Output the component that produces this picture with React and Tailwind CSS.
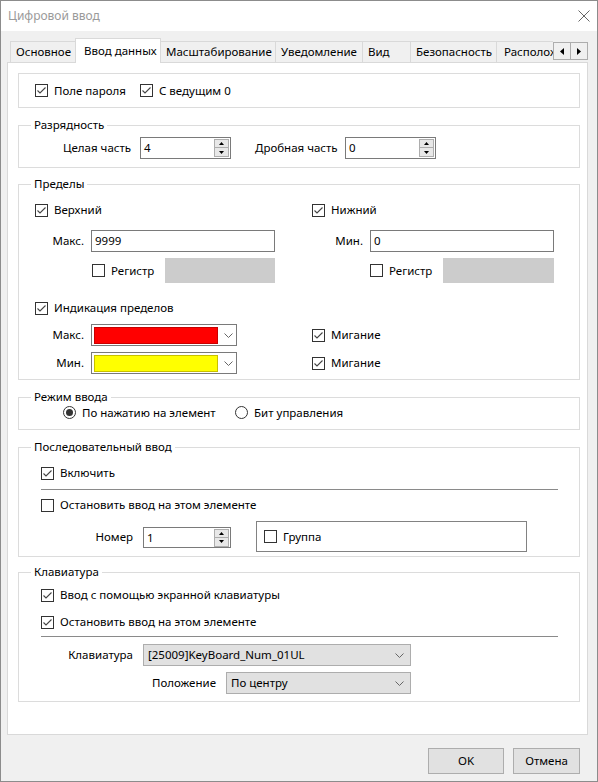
import React from 'react';

// Чекбокс в стиле Windows 10
const Check = ({ checked }) => (
  <svg width="13" height="13" viewBox="0 0 13 13" className="shrink-0">
    <rect x="0.5" y="0.5" width="12" height="12" fill="#fff" stroke="#333" />
    {checked && (
      <polyline points="2.5,6.5 5,9 10.5,3.5" fill="none" stroke="#444" strokeWidth="1.1" />
    )}
  </svg>
);

const CheckBox = ({ checked, label, className = '' }) => (
  <div className={`flex items-center gap-[6px] ${className}`}>
    <Check checked={checked} />
    <span className="whitespace-nowrap">{label}</span>
  </div>
);

const Radio = ({ checked, label, className = '' }) => (
  <div className={`flex items-center gap-[6px] ${className}`}>
    <svg width="13" height="13" viewBox="0 0 13 13" className="shrink-0">
      <circle cx="6.5" cy="6.5" r="6" fill="#fff" stroke="#333" />
      {checked && <circle cx="6.5" cy="6.5" r="3.5" fill="#333" />}
    </svg>
    <span className="whitespace-nowrap">{label}</span>
  </div>
);

const Chevron = () => (
  <svg width="9" height="5" viewBox="0 0 9 5" className="shrink-0">
    <polyline points="0.5,0.5 4.5,4.5 8.5,0.5" fill="none" stroke="#666" />
  </svg>
);

const SpinBox = ({ value, className = '' }) => (
  <div className={`flex items-center border border-[#7a7a7a] bg-white ${className}`}>
    <span className="flex-1 pl-[3px]">{value}</span>
    <div className="flex flex-col mr-[1px] border border-[#adadad] bg-[#e8e8e8]">
      <div className="w-[13px] h-[8px] flex items-center justify-center border-b border-[#adadad]">
        <svg width="5" height="3" viewBox="0 0 5 3">
          <polygon points="0,3 2.5,0 5,3" fill="#000" />
        </svg>
      </div>
      <div className="w-[13px] h-[8px] flex items-center justify-center">
        <svg width="5" height="3" viewBox="0 0 5 3">
          <polygon points="0,0 2.5,3 5,0" fill="#000" />
        </svg>
      </div>
    </div>
  </div>
);

const TextBox = ({ value, className = '' }) => (
  <div className={`flex items-center border border-[#7a7a7a] bg-white pl-[3px] ${className}`}>
    {value}
  </div>
);

const ColorCombo = ({ swatch }) => (
  <div className="flex items-center w-[146px] h-[22px] border border-[#7a7a7a] bg-white pl-[2px]">
    <div className={`w-[124px] h-[17px] border ${swatch}`} />
    <div className="flex-1 flex justify-center pl-[2px]">
      <Chevron />
    </div>
  </div>
);

const GrayCombo = ({ value, className = '' }) => (
  <div
    className={`flex items-center justify-between h-[22px] border border-[#adadad] bg-[#e1e1e1] pl-[4px] pr-[6px] ${className}`}
  >
    <span className="whitespace-nowrap">{value}</span>
    <Chevron />
  </div>
);

const Group = ({ title, className = '', children }) => (
  <fieldset className={`border border-[#dcdcdc] ${className}`}>
    <legend className="ml-[12px] px-[3px] leading-[16px]">{title}</legend>
    {children}
  </fieldset>
);

const Separator = () => <div className="w-[517px] h-px bg-[#8a8a8a]" />;

const tabs = [
  { name: 'Основное', w: 'w-[66px] border-l' },
  { name: 'Ввод данных', active: true },
  { name: 'Масштабирование', w: 'w-[115px]' },
  { name: 'Уведомление', w: 'w-[87px]' },
  { name: 'Вид', w: 'w-[48px]' },
  { name: 'Безопасность', w: 'w-[86px]' },
];

export default function App() {
  return (
    <div className="w-[598px] h-[782px] flex flex-col border border-[#8c8c8c] bg-[#f0f0f0] text-[11.5px] leading-[16px] text-black font-['Segoe_UI','Noto_Sans',sans-serif]">
      {/* заголовок окна */}
      <div className="h-[30px] bg-white flex items-center justify-between pl-[7px] pr-[7px]">
        <span className="text-[12px] text-[#9a9a9a]">Цифровой ввод</span>
        <svg width="12" height="12" viewBox="0 0 12 12">
          <path d="M0.5 0.5 L11.5 11.5 M11.5 0.5 L0.5 11.5" stroke="#666" strokeWidth="1" />
        </svg>
      </div>

      <div className="px-[6px] pt-[7px]">
        {/* вкладки */}
        <div className="relative z-10 flex h-[25px] w-[581px]">
          <div className="flex-1 flex items-end overflow-hidden pl-[3px]">
            {tabs.map((t) =>
              t.active ? (
                <div
                  key={t.name}
                  className="shrink-0 w-[86px] h-[25px] -ml-px flex items-center pl-[8px] pb-[1px] bg-white border-x border-t border-[#d9d9d9] whitespace-nowrap"
                >
                  {t.name}
                </div>
              ) : (
                <div
                  key={t.name}
                  className={`shrink-0 h-[21px] mb-[1px] flex items-center pl-[5px] bg-[#f0f0f0] border-t border-r border-[#d9d9d9] whitespace-nowrap ${t.w}`}
                >
                  {t.name}
                </div>
              )
            )}
            <div className="shrink-0 h-[21px] mb-[1px] flex items-center pl-[7px] pr-[10px] bg-[#f0f0f0] border-t border-[#d9d9d9] whitespace-nowrap">
              Расположение
            </div>
          </div>
          <div className="flex self-start mt-[4px]">
            <div className="w-[18px] h-[18px] flex items-center justify-center border border-[#adadad] bg-[#f0f0f0]">
              <svg width="4" height="7" viewBox="0 0 4 7">
                <polygon points="4,0 0,3.5 4,7" fill="#000" />
              </svg>
            </div>
            <div className="w-[18px] h-[18px] -ml-px flex items-center justify-center border border-[#adadad] bg-[#f0f0f0]">
              <svg width="4" height="7" viewBox="0 0 4 7">
                <polygon points="0,0 4,3.5 0,7" fill="#000" />
              </svg>
            </div>
          </div>
        </div>

        {/* страница «Ввод данных» */}
        <div className="-mt-px w-[581px] h-[673px] flex flex-col border border-[#d9d9d9] bg-white pt-[10px] pl-[10px] pr-[7px]">
          <div className="h-[35px] flex items-center border border-[#dcdcdc] pl-[16px]">
            <CheckBox checked label="Поле пароля" className="w-[105px]" />
            <CheckBox checked label="С ведущим 0" />
          </div>

          <Group title="Разрядность" className="mt-[9px]">
            <div className="flex items-center h-[22px] mt-[4px] mb-[8px] pl-[44px]">
              <span className="w-[77px]">Целая часть</span>
              <SpinBox value="4" className="w-[91px] h-[22px]" />
              <span className="w-[90px] ml-[24px]">Дробная часть</span>
              <SpinBox value="0" className="w-[91px] h-[22px]" />
            </div>
          </Group>

          <Group title="Пределы" className="mt-[8px]">
            <div className="grid grid-cols-[277px_1fr] pl-[16px] pt-[8px] pb-[5px]">
              <CheckBox checked label="Верхний" className="h-[20px]" />
              <CheckBox checked label="Нижний" className="h-[20px]" />

              <div className="flex items-center mt-[10px]">
                <span className="w-[49px] text-right">Макс.</span>
                <TextBox value="9999" className="ml-[7px] w-[184px] h-[22px]" />
              </div>
              <div className="flex items-center mt-[10px]">
                <span className="w-[51px] text-right">Мин.</span>
                <TextBox value="0" className="ml-[7px] w-[184px] h-[22px]" />
              </div>

              <div className="flex items-center mt-[6px] h-[25px] pl-[57px]">
                <CheckBox label="Регистр" className="w-[73px]" />
                <div className="w-[110px] h-[25px] bg-[#cccccc]" />
              </div>
              <div className="flex items-center mt-[6px] h-[25px] pl-[58px]">
                <CheckBox label="Регистр" className="w-[73px]" />
                <div className="w-[111px] h-[25px] bg-[#cccccc]" />
              </div>

              <CheckBox checked label="Индикация пределов" className="h-[20px] mt-[15px] col-span-2" />

              <div className="flex items-center mt-[6px]">
                <span className="w-[49px] text-right">Макс.</span>
                <div className="ml-[7px]">
                  <ColorCombo swatch="bg-[#ff0000] border-[#c80000]" />
                </div>
              </div>
              <CheckBox checked label="Мигание" className="mt-[6px] h-[22px]" />

              <div className="flex items-center mt-[6px]">
                <span className="w-[49px] text-right">Мин.</span>
                <div className="ml-[7px]">
                  <ColorCombo swatch="bg-[#ffff00] border-[#c8c000]" />
                </div>
              </div>
              <CheckBox checked label="Мигание" className="mt-[6px] h-[22px]" />
            </div>
          </Group>

          <Group title="Режим ввода" className="mt-[9px]">
            <div className="flex items-center h-[15px] mb-[9px] pl-[44px]">
              <Radio checked label="По нажатию на элемент" className="w-[172px]" />
              <Radio label="Бит управления" />
            </div>
          </Group>

          <Group title="Последовательный ввод" className="mt-[9px]">
            <div className="flex flex-col pl-[22px] pt-[8px] pb-[4px]">
              <CheckBox checked label="Включить" className="h-[20px]" />
              <div className="mt-[6px]">
                <Separator />
              </div>
              <CheckBox label="Остановить ввод на этом элементе" className="h-[20px] mt-[5px]" />
              <div className="flex items-start h-[31px] mt-[6px]">
                <span className="w-[92px] text-right mt-[8px]">Номер</span>
                <SpinBox value="1" className="ml-[10px] mt-[6px] w-[88px] h-[21px]" />
                <div className="ml-[25px] w-[271px] h-[31px] flex items-center border border-[#828282] pl-[7px]">
                  <CheckBox label="Группа" />
                </div>
              </div>
            </div>
          </Group>

          <Group title="Клавиатура" className="mt-[7px]">
            <div className="flex flex-col pl-[22px] pt-[5px] pb-[7px]">
              <CheckBox checked label="Ввод с помощью экранной клавиатуры" className="h-[20px]" />
              <CheckBox checked label="Остановить ввод на этом элементе" className="h-[20px] mt-[7px]" />
              <div className="mt-[4px]">
                <Separator />
              </div>
              <div className="w-[370px] flex items-center justify-end mt-[7px]">
                <span>Клавиатура</span>
                <GrayCombo value="[25009]KeyBoard_Num_01UL" className="ml-[10px] w-[268px]" />
              </div>
              <div className="w-[370px] flex items-center justify-end mt-[6px]">
                <span>Положение</span>
                <GrayCombo value="По центру" className="ml-[10px] w-[185px]" />
              </div>
            </div>
          </Group>
        </div>
      </div>

      {/* кнопки диалога */}
      <div className="flex justify-end gap-[9px] mt-[13px] pr-[17px]">
        <button className="w-[76px] h-[26px] border border-[#adadad] bg-[#e1e1e1]">OK</button>
        <button className="w-[67px] h-[26px] border border-[#adadad] bg-[#e1e1e1]">Отмена</button>
      </div>
    </div>
  );
}
